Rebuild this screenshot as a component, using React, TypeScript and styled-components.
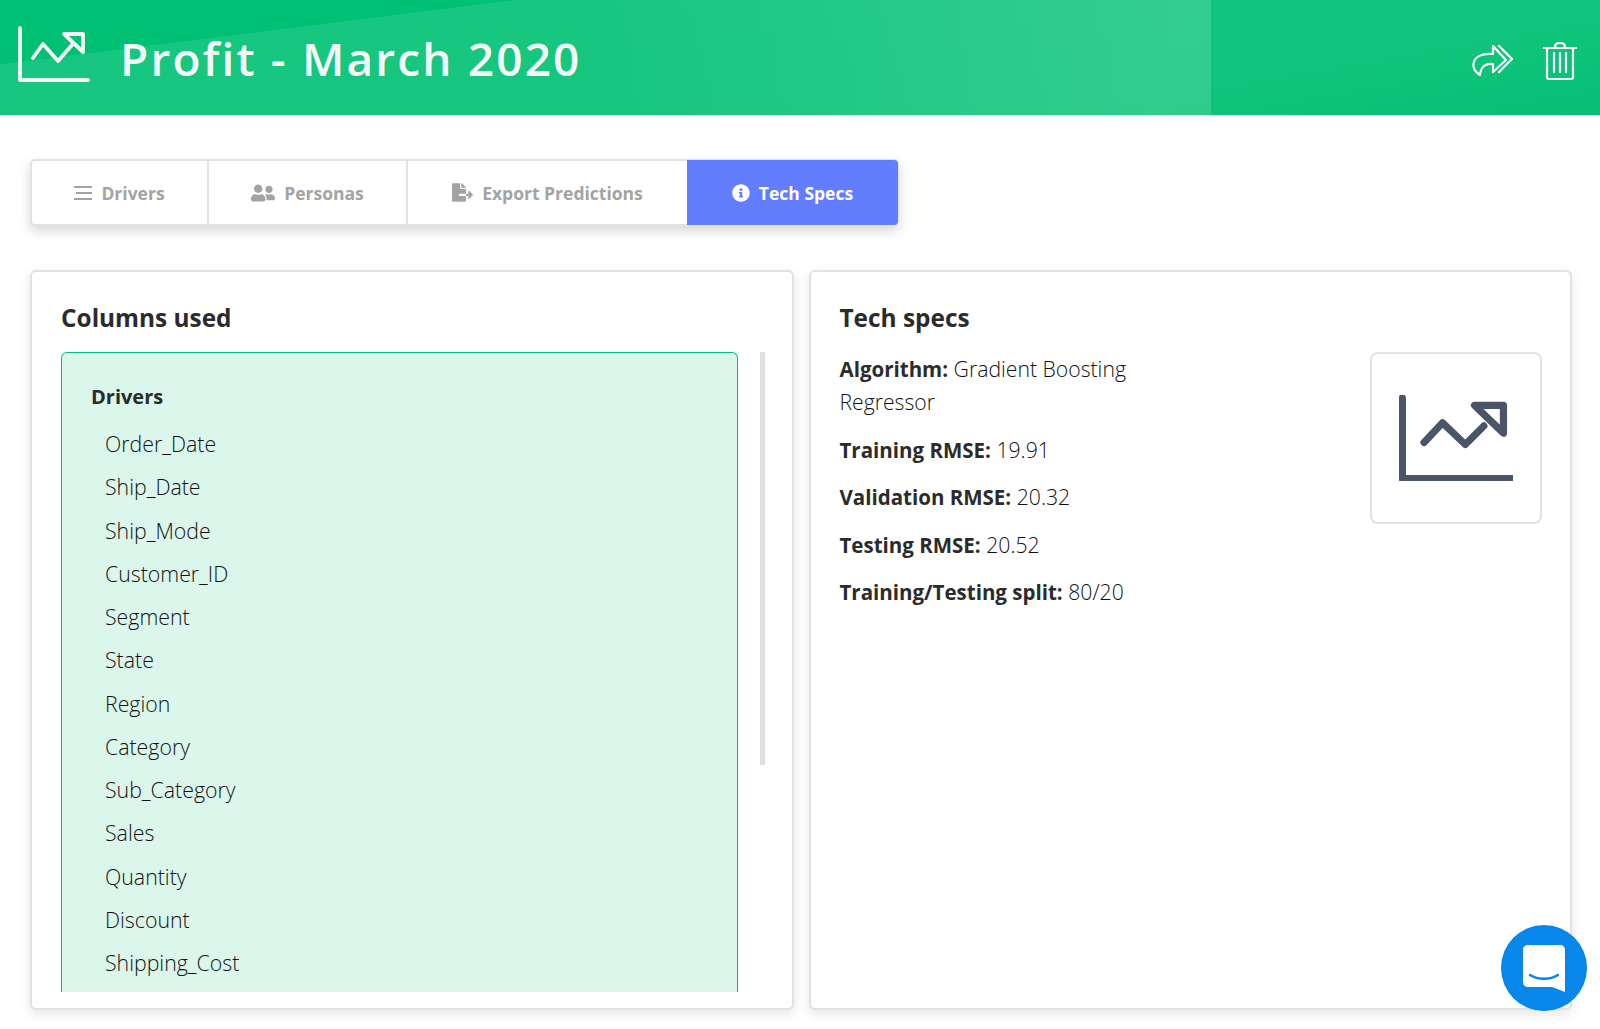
import React from "react";
import styled, { createGlobalStyle } from "styled-components";
import { FaUserFriends, FaFileExport, FaInfoCircle } from "react-icons/fa";

const Global = createGlobalStyle`
  html, body { margin: 0; padding: 0; background: #fff; height: 100%; overflow: hidden; }
  * { box-sizing: border-box; }
  body { font-family: "Open Sans", "Noto Sans", sans-serif; color: #2b2b2b; }
`;
const Page = styled.div`
  width: 1600px; height: 1029px; position: relative; overflow: hidden;
  display: flex; flex-direction: column;
`;
const Header = styled.header`
  height: 115px; flex: none; display: flex; align-items: center; justify-content: space-between;
  padding: 0 23px 0 17px;
  background:
    linear-gradient(172.85deg, #00c073 63.5px, transparent 64.5px),
    linear-gradient(to right, rgba(255,255,255,.01) 0, rgba(255,255,255,.02) 600px, rgba(255,255,255,.14) 1170px, rgba(255,255,255,.14) 1211px, transparent 1211px),
    linear-gradient(170deg, #14c67f 0%, #10c57b 75%, #05bf74 100%);
`;
const Brand = styled.div` display: flex; align-items: center; gap: 29px; `;
const BrandIcon = styled.svg` margin-top: -7px; flex: none; `;
const Title = styled.h1`
  margin: 0; color: #f5f7f6; font-family: "Open Sans", sans-serif; font-weight: 600;
  font-size: 46px; letter-spacing: 2.15px; line-height: 1;
`;
const Actions = styled.div` display: flex; align-items: center; gap: 30px; margin-top: 6px; `;
const Main = styled.main`
  flex: 1; display: flex; flex-direction: column; padding: 44px 28px 19px 30px; gap: 44px; min-height: 0;
`;
const Tabs = styled.nav`
  display: flex; align-self: flex-start; height: 67px; background: #fff;
  border: 2px solid #e2e2e2; border-radius: 5px; box-shadow: 0 5px 12px rgba(0,0,0,.16);
`;
const Tab = styled.div<{ $w: number; $active?: boolean }>`
  width: ${p => p.$w}px; display: flex; align-items: center; justify-content: center; gap: 9px;
  font-size: 17.5px; font-weight: 700;
  color: ${p => (p.$active ? "#fff" : "#a3a3a3")};
  background: ${p => (p.$active ? "#627eff" : "transparent")};
  border-left: ${p => (p.$active ? "none" : "2px solid #e2e2e2")};
  border-radius: ${p => (p.$active ? "0 4px 4px 0" : "0")};
  margin: ${p => (p.$active ? "-1px -1px -1px 0" : "0")};
  &:first-child { border-left: none; }
`;
const Cards = styled.div` flex: 1; display: flex; gap: 15px; min-height: 0; `;
const Card = styled.section`
  flex: 1 1 0; min-width: 0; border: 2px solid #e2e2e2; border-radius: 6px; background: #fff;
  box-shadow: 0 4px 12px rgba(0,0,0,.1); padding: 29px 28px 16px 29px; display: flex; flex-direction: column; min-height: 0;
`;
const CardTitle = styled.h2`
  margin: 0 0 17px; font-size: 24.4px; font-weight: 700; line-height: 34px; color: #2b2b2b;
`;
const ScrollRow = styled.div` flex: 1; display: flex; min-height: 0; `;
const ListBox = styled.div`
  flex: none; width: 677px; height: 100%; overflow: hidden; background: #dbf6ea;
  border: 1px solid #00c073; border-bottom: none; border-radius: 6px 6px 0 0; padding: 27px 29px;
`;
const ListHead = styled.h3` margin: 0 0 8px; font-size: 20px; font-weight: 700; line-height: 34px; color: #2b2b2b; `;
const ListItem = styled.div` font-size: 21.3px; font-weight: 300; line-height: 43.25px; padding-left: 14px; color: #111; `;
const Thumb = styled.div` width: 5px; height: 413px; margin-left: 22px; background: #dfdfdf; flex: none; `;
const SpecRow = styled.div` display: flex; justify-content: space-between; align-items: flex-start; `;
const SpecList = styled.div` width: 330px; `;
const Spec = styled.p`
  margin: 0 0 14.6px; font-size: 21.2px; font-weight: 300; line-height: 33px; color: #111;
  b { font-weight: 700; font-size: 20.5px; line-height: 1; color: #2b2b2b; }
`;
const Thumbnail = styled.div`
  width: 172px; height: 172px; border: 2px solid #e2e2e2; border-radius: 8px;
  display: flex; align-items: center; justify-content: center;
`;
const Chat = styled.div`
  position: absolute; right: 13px; bottom: 18px; width: 86px; height: 86px; border-radius: 50%;
  background: #0787ea; display: flex; align-items: center; justify-content: center;
`;

const ChartIcon = ({ size, color, sw }: { size: number; color: string; sw: number }) => (
  <svg width={size} height={size * 0.76} viewBox="0 0 110 84" fill="none" stroke={color} strokeWidth={sw} strokeLinecap="round" strokeLinejoin="round">
    <path d="M3 3V81H109" />
    <path d="M24 46L42 27L64 48L82 30" />
    <path d="M73 10H101V37Z" />
  </svg>
);

const items = ["Order_Date","Ship_Date","Ship_Mode","Customer_ID","Segment","State","Region","Category","Sub_Category","Sales","Quantity","Discount","Shipping_Cost"];

export default function App() {
  return (
    <Page>
      <Global />
      <Header>
        <Brand>
          <BrandIcon width="74" height="56" viewBox="0 0 74 56" fill="none" stroke="#f5f7f6" strokeWidth="3.8" strokeLinecap="round" strokeLinejoin="round">
            <path d="M3 2V54H71" />
            <path d="M16 32L26 18L41 35L55 19" />
            <path d="M47 8H66V26Z" />
          </BrandIcon>
          <Title>Profit - March 2020</Title>
        </Brand>
        <Actions>
          <svg width="41" height="33" viewBox="0 0 41 33" fill="none" stroke="#fff" strokeWidth="2.2" strokeLinecap="round" strokeLinejoin="round">
            <path d="M21 2L34 16L21 28V20C14 19 9 22 8 31C3 28 1 24 1.500 20C2.500 12 11 9 21 10Z" />
            <path d="M27 2L40 15L27 28" />
          </svg>
          <svg width="34" height="38" viewBox="0 0 34 38" fill="none" stroke="#fff" strokeWidth="2.2" strokeLinecap="round" strokeLinejoin="round">
            <path d="M1 6H33M12 5C12 2 14 1 17 1S22 2 22 5" />
            <path d="M4 7V35C4 36 5 37 6 37H28C29 37 30 36 30 35V7" />
            <path d="M11 11V30M17 11V30M23 11V30" />
          </svg>
        </Actions>
      </Header>
      <Main>
        <Tabs>
          <Tab $w={175}>
            <svg width="18" height="14" viewBox="0 0 18 14" stroke="#a3a3a3" strokeWidth="2"><path d="M0 1H18M2 7H18M0 13H18" /></svg>
            Drivers
          </Tab>
          <Tab $w={199}><FaUserFriends size={24} />Personas</Tab>
          <Tab $w={281}><FaFileExport size={21} />Export Predictions</Tab>
          <Tab $w={211} $active><FaInfoCircle size={18} />Tech Specs</Tab>
        </Tabs>
        <Cards>
          <Card>
            <CardTitle>Columns used</CardTitle>
            <ScrollRow>
              <ListBox>
                <ListHead>Drivers</ListHead>
                {items.map(i => <ListItem key={i}>{i}</ListItem>)}
              </ListBox>
              <Thumb />
            </ScrollRow>
          </Card>
          <Card>
            <CardTitle>Tech specs</CardTitle>
            <SpecRow>
              <SpecList>
                <Spec><b>Algorithm:</b> Gradient Boosting Regressor</Spec>
                <Spec><b>Training RMSE:</b> 19.91</Spec>
                <Spec><b>Validation RMSE:</b> 20.32</Spec>
                <Spec><b>Testing RMSE:</b> 20.52</Spec>
                <Spec><b>Training/Testing split:</b> 80/20</Spec>
              </SpecList>
              <Thumbnail><ChartIcon size={114} color="#4a5568" sw={7} /></Thumbnail>
            </SpecRow>
          </Card>
        </Cards>
      </Main>
      <Chat>
        <svg width="42" height="47" viewBox="0 0 42 47" fill="none">
          <path d="M5 0H37C40 0 42 2 42 5V47L29 42H5C2 42 0 40 0 37V5C0 2 2 0 5 0Z" fill="#fff" />
          <path d="M7 30C15 35 27 35 35 30" stroke="#0787ea" strokeWidth="2.500" strokeLinecap="round" />
        </svg>
      </Chat>
    </Page>
  );
}
